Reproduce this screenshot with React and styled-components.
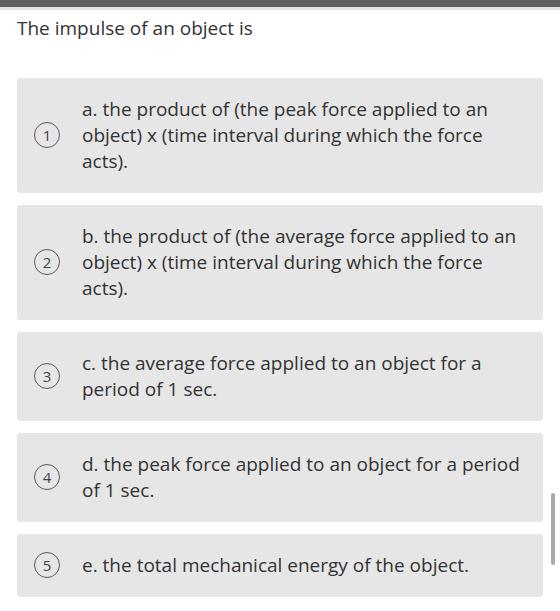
import React from "react";
import styled, { createGlobalStyle } from "styled-components";

const GlobalStyle = createGlobalStyle`
  html, body {
    margin: 0;
    padding: 0;
    background: #ffffff;
  }
  body {
    font-family: "Open Sans", "Noto Sans", sans-serif;
    color: #333333;
    overflow: hidden;
  }
`;

const Page = styled.div`
  position: relative;
  width: 560px;
  height: 611px;
  overflow: hidden;
`;

const TopBar = styled.div`
  height: 7px;
  background: #616161;
  border-bottom: 3px solid #e4e4e4;
`;

const Question = styled.h2`
  margin: 5px 17px 0;
  font-size: 19px;
  font-weight: 400;
  line-height: 26px;
  color: #333333;
`;

const Choices = styled.ol`
  list-style: none;
  margin: 37px 17px 0;
  padding: 0;
  display: flex;
  flex-direction: column;
  gap: 12px;
`;

const Choice = styled.li`
  display: flex;
  align-items: center;
  gap: 22px;
  padding: 18px 22px 19px 17px;
  background: #e6e6e6;
  border-radius: 3px;
`;

const Badge = styled.span`
  flex: none;
  box-sizing: border-box;
  width: 26px;
  height: 26px;
  border: 1.5px solid #5a5a5a;
  border-radius: 50%;
  display: flex;
  align-items: center;
  justify-content: center;
  font-size: 15px;
  line-height: 1;
  color: #444444;
`;

const ChoiceText = styled.span`
  font-size: 19px;
  line-height: 26px;
  color: #333333;
`;

const ScrollThumb = styled.div`
  position: absolute;
  right: 5px;
  top: 493px;
  width: 4px;
  height: 72px;
  border-radius: 2px;
  background: #a9a9a9;
`;

const choices = [
  "a. the product of (the peak force applied to an object) x (time interval during which the force acts).",
  "b. the product of (the average force applied to an object) x (time interval during which the force acts).",
  "c. the average force applied to an object for a period of 1 sec.",
  "d. the peak force applied to an object for a period of 1 sec.",
  "e. the total mechanical energy of the object.",
];

export default function App() {
  return (
    <Page>
      <GlobalStyle />
      <TopBar />
      <Question>The impulse of an object is</Question>
      <Choices>
        {choices.map((text, i) => (
          <Choice key={i}>
            <Badge>{i + 1}</Badge>
            <ChoiceText>{text}</ChoiceText>
          </Choice>
        ))}
      </Choices>
      <ScrollThumb />
    </Page>
  );
}
